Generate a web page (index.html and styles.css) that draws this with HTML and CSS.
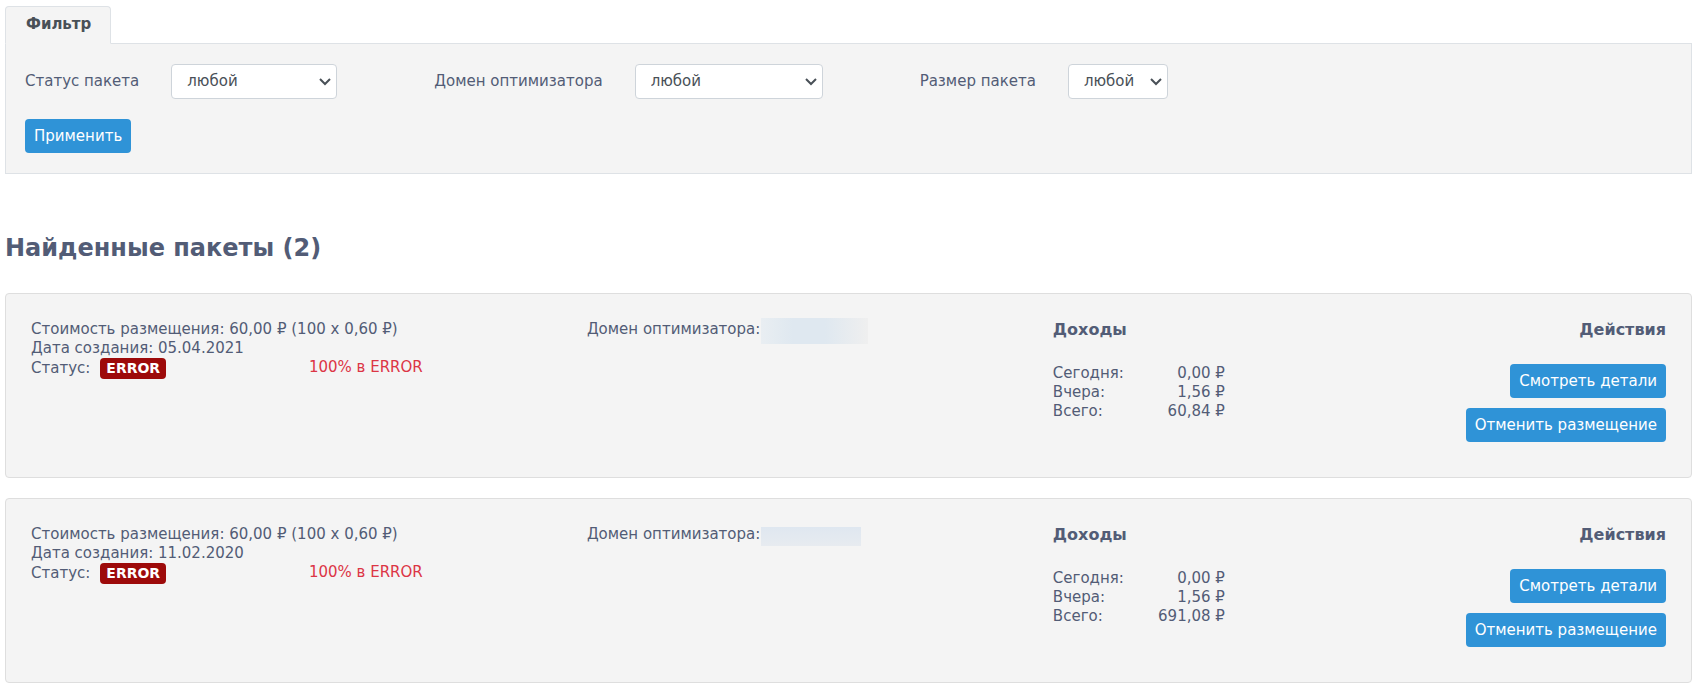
FILE: index.html
```
<!DOCTYPE html>
<html lang="ru">
<head>
  <meta charset="utf-8">
  <title>Найденные пакеты</title>
  <link rel="stylesheet" href="styles.css">
</head>
<body>
  <div class="tabs">
    <a class="tab" href="#filter">Фильтр</a>
  </div>
  <form class="filter" id="filter">
    <div class="filter-fields">
      <div class="field">
        <label for="status">Статус пакета</label>
        <select class="select-status" id="status">
          <option>любой</option>
        </select>
      </div>
      <div class="field">
        <label for="domain">Домен оптимизатора</label>
        <select class="select-domain" id="domain">
          <option>любой</option>
        </select>
      </div>
      <div class="field">
        <label for="size">Размер пакета</label>
        <select class="select-size" id="size">
          <option>любой</option>
        </select>
      </div>
    </div>
    <button class="button" type="button">Применить</button>
  </form>

  <h1>Найденные пакеты (2)</h1>

  <div class="package">
    <div class="info">
      <div>Стоимость размещения: 60,00 ₽ (100 x 0,60 ₽)</div>
      <div>Дата создания: 05.04.2021</div>
      <div class="status">
        <div class="status-name">Статус: <span class="badge">ERROR</span></div>
        <div class="error">100% в ERROR</div>
      </div>
    </div>
    <div class="domain">Домен оптимизатора: <span class="hidden-domain"></span></div>
    <div class="income">
      <h2>Доходы</h2>
      <table>
        <tr><th>Сегодня:</th><td>0,00 ₽</td></tr>
        <tr><th>Вчера:</th><td>1,56 ₽</td></tr>
        <tr><th>Всего:</th><td>60,84 ₽</td></tr>
      </table>
    </div>
    <div class="actions">
      <h2>Действия</h2>
      <button class="button" type="button">Смотреть детали</button>
      <button class="button" type="button">Отменить размещение</button>
    </div>
  </div>

  <div class="package">
    <div class="info">
      <div>Стоимость размещения: 60,00 ₽ (100 x 0,60 ₽)</div>
      <div>Дата создания: 11.02.2020</div>
      <div class="status">
        <div class="status-name">Статус: <span class="badge">ERROR</span></div>
        <div class="error">100% в ERROR</div>
      </div>
    </div>
    <div class="domain">Домен оптимизатора: <span class="hidden-domain small"></span></div>
    <div class="income">
      <h2>Доходы</h2>
      <table>
        <tr><th>Сегодня:</th><td>0,00 ₽</td></tr>
        <tr><th>Вчера:</th><td>1,56 ₽</td></tr>
        <tr><th>Всего:</th><td>691,08 ₽</td></tr>
      </table>
    </div>
    <div class="actions">
      <h2>Действия</h2>
      <button class="button" type="button">Смотреть детали</button>
      <button class="button" type="button">Отменить размещение</button>
    </div>
  </div>
</body>
</html>
```
FILE: styles.css
```
* {
  box-sizing: border-box;
}

body {
  margin: 0;
  padding: 6px 2px 6px 5px;
  background-color: #fff;
  color: #525c76;
  font-family: Verdana, "DejaVu Sans", sans-serif;
  font-size: 15px;
  line-height: 19px;
}

.tabs {
  display: flex;
}

.tab {
  margin-bottom: -1px;
  padding: 8px 19px 9px 20px;
  border: 1px solid #dee2e6;
  border-bottom-color: #f4f4f4;
  border-radius: 4px 4px 0 0;
  background-color: #f4f4f4;
  color: #495057;
  font-weight: bold;
  text-decoration: none;
  position: relative;
}

.filter {
  padding: 20px 19px;
  border: 1px solid #dee2e6;
  background-color: #f4f4f4;
}

.filter-fields {
  display: flex;
  flex-wrap: wrap;
  gap: 20px 97px;
  margin-bottom: 20px;
}

.field {
  display: flex;
  align-items: center;
  gap: 32px;
}

select {
  height: 35px;
  padding: 0 20px 0 15px;
  border: 1px solid #ced4da;
  border-radius: 4px;
  appearance: none;
  background: #fff url("data:image/svg+xml,%3Csvg xmlns='http://www.w3.org/2000/svg' width='12' height='8' viewBox='0 0 12 8'%3E%3Cpath d='M1 1l5 5 5-5' fill='none' stroke='%23495057' stroke-width='2'/%3E%3C/svg%3E") no-repeat right 5px center;
  color: #495057;
  font: inherit;
}

.select-status {
  width: 166px;
}

.select-domain {
  width: 188px;
}

.select-size {
  width: 100px;
}

.button {
  height: 34px;
  padding: 0 9px;
  border: none;
  border-radius: 4px;
  background-color: #2f93d7;
  color: #fff;
  font: inherit;
  cursor: pointer;
}

.button:hover {
  background-color: #257fbc;
}

h1 {
  margin: 58px 0 28px;
  font-size: 24px;
  line-height: 33px;
}

h2 {
  margin: 0 0 24px;
  font-size: 16px;
  line-height: 20px;
}

.package {
  display: grid;
  grid-template-columns: 34% 28.5% 1fr auto;
  margin-bottom: 20px;
  padding: 26px 25px 35px;
  border: 1px solid #dedede;
  border-radius: 4px;
  background-color: #f4f4f4;
}

.status {
  display: grid;
  grid-template-columns: 1fr 1fr;
}

.status-name {
  display: flex;
  align-items: center;
  gap: 10px;
}

.badge {
  padding: 1px 6px;
  border-radius: 4px;
  background-color: #9d0a0a;
  color: #fff;
  font-size: 14px;
  font-weight: bold;
}

.error {
  color: #dc3545;
}

.domain {
  display: flex;
  align-items: flex-start;
  gap: 1px;
}

/* blurred domain name */
.hidden-domain {
  width: 107px;
  height: 26px;
  margin-top: -2px;
  background: linear-gradient(to right, #e9eef2, #dfe8f0 30%, #dfe8f0 60%, #efefef);
}

.hidden-domain.small {
  width: 100px;
  height: 19px;
  margin-top: 2px;
  background: linear-gradient(#dfe7f0, #e7ebf0);
}

table {
  width: 172px;
  border-collapse: collapse;
}

th,
td {
  padding: 0;
  font-weight: normal;
  text-align: left;
}

td {
  text-align: right;
}

.actions {
  display: flex;
  flex-direction: column;
  align-items: flex-end;
  gap: 10px;
}

.actions h2 {
  margin-bottom: 14px;
}
```
